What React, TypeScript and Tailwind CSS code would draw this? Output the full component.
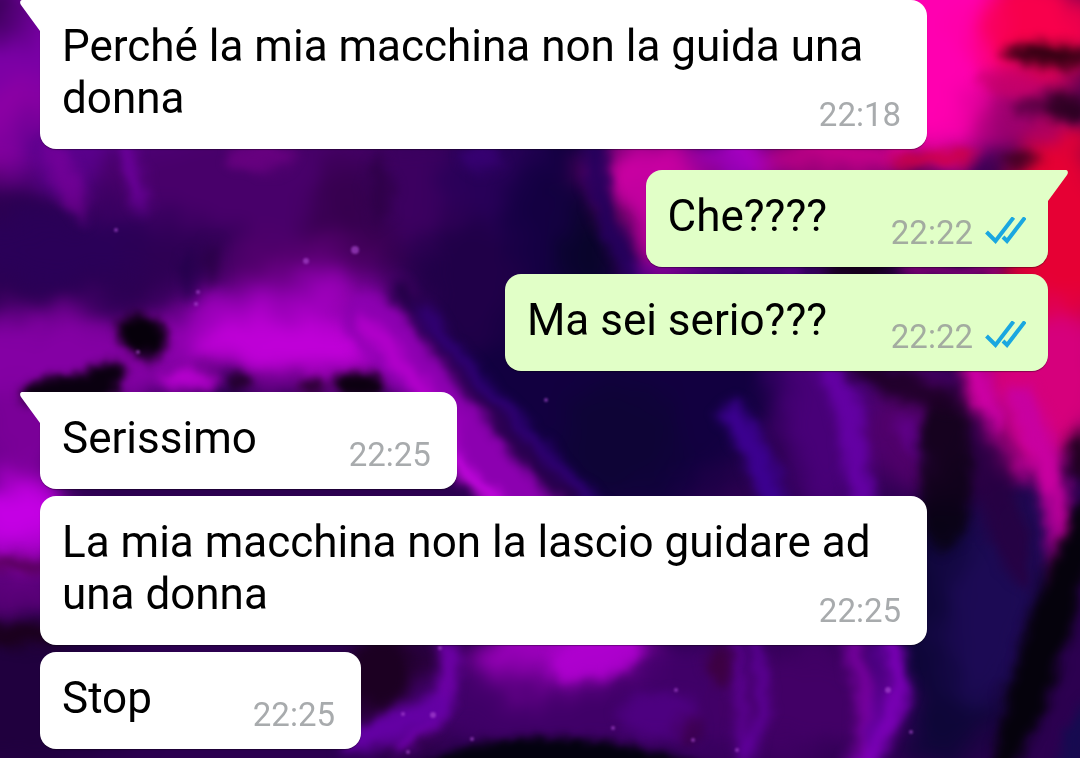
/**
 * Chat conversation over a space-coloured wallpaper.
 */

interface Message {
  id: number
  text: string
  time: string
  outgoing?: boolean
}

/* Consecutive messages of one sender, the first one carries the tail */
const GROUPS: Message[][] = [
  [{ id: 1, text: 'Perché la mia macchina non la guida una donna', time: '22:18' }],
  [
    { id: 2, text: 'Che????', time: '22:22', outgoing: true },
    { id: 3, text: 'Ma sei serio???', time: '22:22', outgoing: true },
  ],
  [
    { id: 4, text: 'Serissimo', time: '22:25' },
    { id: 5, text: 'La mia macchina non la lascio guidare ad una donna', time: '22:25' },
    { id: 6, text: 'Stop', time: '22:25' },
  ],
]

/* ------------------------------------------------------------------ */
/*  Wallpaper                                                          */
/* ------------------------------------------------------------------ */

/* cx, cy, rx, ry, rotation, fill, opacity */
type Blob = [number, number, number, number, number, string, number]

const WASHES: Blob[] = [
  [60, 60, 120, 130, 0, '#7a00a6', 1],
  [0, 10, 30, 30, 0, '#3a0058', 1],
  [20, 130, 60, 50, 0, '#8c00a4', 1],
  [160, 150, 150, 50, 0, '#5a008c', 1],
  [280, 190, 190, 70, 0, '#48006a', 1],
  [80, 250, 130, 40, 0, '#2a0058', 1],
  [190, 262, 60, 36, 0, '#2e0054', 1],
  [365, 215, 50, 60, 0, '#36004e', 1],
  [430, 190, 60, 60, 0, '#3c0060', 1],
  [300, 262, 80, 24, 0, '#54006c', 1],
  [40, 360, 170, 48, 0, '#8400a4', 1],
  [290, 325, 130, 50, 0, '#9000b0', 1],
  [305, 348, 120, 36, 0, '#c000d8', 1],
  [20, 430, 50, 50, 0, '#7a0098', 1],
  [20, 520, 60, 46, 0, '#c400e4', 1],
  [20, 595, 60, 22, 0, '#620080', 1],
  [20, 695, 130, 76, 0, '#20003e', 1],
  [610, 310, 180, 210, 0, '#120040', 1],
  [470, 280, 50, 70, 0, '#200048', 1],
  [500, 180, 60, 50, 0, '#280058', 1],
  [545, 220, 40, 60, 0, '#150044', 1],
  [590, 240, 30, 60, 0, '#08042a', 1],
  [645, 175, 54, 40, 0, '#dc00aa', 1],
  [655, 215, 36, 70, -15, '#c400a0', 1],
  [740, 155, 46, 26, 0, '#b000cc', 1],
  [850, 155, 90, 26, 0, '#cc008c', 1],
  [620, 440, 60, 60, 0, '#0e0436', 1],
  [825, 400, 46, 130, -6, '#480078', 1],
  [920, 430, 60, 60, 0, '#50006a', 1],
  [950, 50, 80, 110, 0, '#ff00b0', 1],
  [1040, 30, 60, 60, 0, '#f8004c', 1],
  [1030, 112, 60, 34, 0, '#a00070', 1],
  [1060, 240, 60, 110, 0, '#e60034', 1],
  [1050, 385, 70, 80, 0, '#d6007c', 1],
  [950, 640, 70, 130, 0, '#0e0638', 1],
  [1000, 590, 50, 120, 12, '#1c0a54', 1],
  [400, 690, 60, 60, 0, '#260034', 1],
  [650, 700, 260, 60, 0, '#400068', 1],
  [800, 700, 90, 60, 0, '#420066', 1],
  [560, 650, 90, 34, -6, '#9c00bc', 1],
]

const SHADES: Blob[] = [
  [945, 470, 28, 80, 0, '#08020c', 0.8],
  [1000, 500, 20, 90, -16, '#280040', 0.8],
  [900, 385, 60, 14, 20, '#1e0026', 0.9],
  [1045, 640, 22, 150, 18, '#05020c', 1],
  [1078, 740, 14, 40, 18, '#160a50', 1],
  [1048, 55, 46, 10, 3, '#2a0010', 1],
  [1066, 108, 24, 16, 12, '#24001c', 0.9],
  [1034, 104, 22, 8, -20, '#4c003c', 0.9],
  [1022, 160, 18, 8, 0, '#3a001a', 0.9],
  [1010, 84, 34, 10, 10, '#c4006c', 0.8],
  [860, 270, 40, 8, 0, '#100010', 1],
  [1080, 455, 10, 26, 0, '#1c001c', 1],
  [190, 275, 8, 24, 0, '#200048', 0.7],
  [212, 265, 8, 26, 0, '#240040', 0.7],
  [380, 190, 12, 36, 0, '#28003e', 0.6],
  [66, 180, 14, 44, -25, '#8000a0', 0.6],
  [132, 170, 9, 46, -14, '#8000b8', 0.6],
  [262, 156, 34, 14, 0, '#7c008e', 0.6],
  [480, 158, 20, 14, 0, '#3c007c', 0.7],
  [190, 380, 30, 9, 0, '#c400da', 0.9],
  [596, 656, 50, 24, -14, '#b000d0', 0.9],
  [380, 672, 30, 34, 0, '#1c0022', 1],
  [395, 725, 60, 16, -24, '#6400a4', 1],
  [660, 715, 40, 24, 0, '#52008a', 0.7],
  [720, 665, 12, 22, 0, '#3c0038', 0.8],
  [690, 728, 14, 14, 0, '#38003e', 0.6],
  [20, 564, 40, 7, 0, '#4c0048', 0.9],
  [20, 634, 50, 12, 0, '#1a0018', 0.9],
]

/* dark rocks along the magenta glow */
const ROCKS: Blob[] = [
  [142, 335, 26, 20, 20, '#06000a', 1],
  [148, 356, 12, 7, 0, '#20002c', 0.9],
  [70, 391, 50, 16, -4, '#0a0010', 1],
  [102, 376, 26, 12, -20, '#0a0010', 1],
  [240, 381, 12, 7, 0, '#200028', 1],
  [312, 386, 14, 8, 0, '#2c0034', 1],
  [358, 385, 25, 13, 0, '#0c0010', 1],
]

interface Streak {
  d: string
  color: string
  width: number
}

const STREAKS: Streak[] = [
  { d: 'M370 320 C420 370 460 440 590 560', color: '#8c00b0', width: 54 },
  { d: 'M366 326 C400 356 420 390 450 430', color: '#b400cc', width: 18 },
  { d: 'M430 430 C460 470 480 496 520 520', color: '#d808f0', width: 12 },
  { d: 'M400 290 C440 340 500 430 590 520', color: '#240048', width: 22 },
  { d: 'M420 310 C450 345 500 410 610 520', color: '#340080', width: 11 },
  { d: 'M735 415 C750 440 765 470 780 520', color: '#3c0090', width: 26 },
  { d: 'M830 370 C856 410 850 450 866 520', color: '#6400a4', width: 24 },
  { d: 'M905 425 L930 470', color: '#60008a', width: 18 },
  { d: 'M975 370 C990 420 1000 450 1014 470', color: '#cc00a4', width: 24 },
  { d: 'M1020 400 C1045 450 1055 500 1060 530', color: '#c800a0', width: 30 },
  { d: 'M1050 500 L1060 585', color: '#a00090', width: 15 },
  { d: 'M1003 435 L1014 475', color: '#6c0058', width: 8 },
  { d: 'M596 140 C592 200 616 240 636 280', color: '#24005c', width: 20 },
  { d: 'M640 270 H800', color: '#6c009c', width: 10 },
  { d: 'M905 270 H1000', color: '#9c0080', width: 10 },
  { d: 'M900 162 L970 156', color: '#d00044', width: 14 },
  { d: 'M446 645 C456 690 440 720 400 745', color: '#7400b0', width: 16 },
  { d: 'M735 640 C744 690 738 730 744 770', color: '#6400a0', width: 9 },
  { d: 'M756 640 C764 690 768 710 750 750', color: '#6400a4', width: 10 },
  { d: 'M852 640 C866 690 870 720 856 770', color: '#7c00a4', width: 15 },
  { d: 'M890 640 C910 690 895 720 856 780', color: '#7c00b8', width: 20 },
  { d: 'M872 640 C882 680 880 710 868 740', color: '#5a0096', width: 10 },
]

/* x, y, radius */
const STARS: [number, number, number][] = [
  [403, 714, 2], [433, 715, 3], [408, 752, 2], [472, 739, 2], [888, 690, 3],
  [911, 732, 2], [546, 400, 2], [116, 230, 2], [198, 292, 2], [355, 250, 4],
  [306, 261, 3], [440, 648, 2], [676, 690, 2], [693, 740, 2], [613, 728, 2],
  [138, 352, 2], [196, 304, 2], [737, 750, 2],
]

function Blobs({ items, filter }: { items: Blob[]; filter: string }) {
  return (
    <g filter={filter}>
      {items.map(([cx, cy, rx, ry, angle, fill, opacity], i) => (
        <ellipse
          key={i}
          cx={cx}
          cy={cy}
          rx={rx}
          ry={ry}
          fill={fill}
          opacity={opacity}
          transform={`rotate(${angle} ${cx} ${cy})`}
        />
      ))}
    </g>
  )
}

function Wallpaper() {
  return (
    <svg
      viewBox="0 0 1080 758"
      preserveAspectRatio="xMidYMid slice"
      className="absolute inset-0 h-full w-full"
      aria-hidden="true"
    >
      <defs>
        <filter id="wash" filterUnits="userSpaceOnUse" x="-100" y="-100" width="1280" height="958" colorInterpolationFilters="sRGB">
          <feGaussianBlur stdDeviation="15" result="soft" />
          <feTurbulence type="fractalNoise" baseFrequency="0.02" numOctaves="2" seed="4" />
          <feDisplacementMap in="soft" scale="36" xChannelSelector="R" yChannelSelector="G" />
          <feGaussianBlur stdDeviation="3" />
        </filter>
        <filter id="cloud" filterUnits="userSpaceOnUse" x="-100" y="-100" width="1280" height="958" colorInterpolationFilters="sRGB">
          <feGaussianBlur stdDeviation="6" result="soft" />
          <feTurbulence type="fractalNoise" baseFrequency="0.04" numOctaves="2" seed="8" />
          <feDisplacementMap in="soft" scale="14" xChannelSelector="R" yChannelSelector="G" />
          <feGaussianBlur stdDeviation="2" />
        </filter>
        <filter id="rock" filterUnits="userSpaceOnUse" x="-100" y="-100" width="1280" height="958" colorInterpolationFilters="sRGB">
          <feGaussianBlur stdDeviation="4" result="soft" />
          <feTurbulence type="fractalNoise" baseFrequency="0.07" numOctaves="2" seed="8" />
          <feDisplacementMap in="soft" scale="9" xChannelSelector="R" yChannelSelector="G" />
          <feGaussianBlur stdDeviation="2" />
        </filter>
        <filter id="star" x="-100%" y="-100%" width="300%" height="300%">
          <feGaussianBlur stdDeviation="1" />
        </filter>
      </defs>
      <rect width="1080" height="758" fill="#2c0050" />
      <Blobs items={WASHES} filter="url(#wash)" />
      <g filter="url(#cloud)" fill="none" strokeLinecap="round">
        {STREAKS.map((s) => (
          <path key={s.d} d={s.d} stroke={s.color} strokeWidth={s.width} />
        ))}
      </g>
      <Blobs items={SHADES} filter="url(#cloud)" />
      <Blobs items={ROCKS} filter="url(#rock)" />
      <path d="M400 780 C460 726 600 720 740 780Z" fill="#03020f" filter="url(#rock)" />
      {STARS.map(([x, y, r]) => (
        <circle key={`${x}-${y}`} cx={x} cy={y} r={r} fill="#b050d8" opacity="0.6" filter="url(#star)" />
      ))}
    </svg>
  )
}

/* ------------------------------------------------------------------ */
/*  Bubble                                                             */
/* ------------------------------------------------------------------ */

function Tail({ outgoing }: { outgoing?: boolean }) {
  return (
    <svg
      viewBox="0 0 32 32"
      className={
        outgoing
          ? 'absolute top-0 -right-5 h-8 w-8 -scale-x-100 text-[#e1ffc7]'
          : 'absolute top-0 -left-5 h-8 w-8 text-white'
      }
      aria-hidden="true"
    >
      <path d="M32 0H2C0 0 -0.5 3 1 5L20 31H32Z" fill="currentColor" />
    </svg>
  )
}

function ReadTicks() {
  return (
    <svg viewBox="0 0 42 32" className="h-8 w-[42px]" fill="none" role="img" aria-label="Letto">
      <g stroke="#1aa7e0" strokeWidth="4">
        <path d="M2.5 15L11.5 24L29.5 0.5" />
        <path d="M19 20L23 24L41 0.5" />
      </g>
    </svg>
  )
}

function Bubble({ message, first }: { message: Message; first: boolean }) {
  const { text, time, outgoing } = message
  return (
    <div
      className={`relative grid max-w-[88%] min-w-[321px] rounded-2xl pl-[22px] shadow-[0_1px_1px_rgba(0,0,0,0.35)] ${
        outgoing ? 'self-end bg-[#e1ffc7] pr-[22px]' : 'self-start bg-white pr-[26px]'
      } ${first ? (outgoing ? 'rounded-tr-none' : 'rounded-tl-none') : ''}`}
    >
      {first && <Tail outgoing={outgoing} />}
      <p className="col-start-1 row-start-1 pt-5 pb-[25px] text-[44px] leading-[52px] text-black">
        {text}
        {/* keeps the last line clear of the time */}
        <span className={outgoing ? 'inline-block w-[199px]' : 'inline-block w-[174px]'} />
      </p>
      <div className="col-start-1 row-start-1 flex items-center gap-[11px] self-end justify-self-end pb-[14px]">
        <time className={`text-[33px] leading-10 ${outgoing ? 'text-[#a3aca0]' : 'text-[#a8abad]'}`}>{time}</time>
        {outgoing && <ReadTicks />}
      </div>
    </div>
  )
}

export default function App() {
  return (
    <main className="relative min-h-screen overflow-hidden bg-[#2c0050] font-['Roboto',sans-serif]">
      <Wallpaper />
      <div className="relative flex flex-col gap-[21px] pr-8 pl-10">
        {GROUPS.map((group) => (
          <section key={group[0].id} className="flex flex-col gap-[7px]">
            {group.map((message, i) => (
              <Bubble key={message.id} message={message} first={i === 0} />
            ))}
          </section>
        ))}
      </div>
    </main>
  )
}
